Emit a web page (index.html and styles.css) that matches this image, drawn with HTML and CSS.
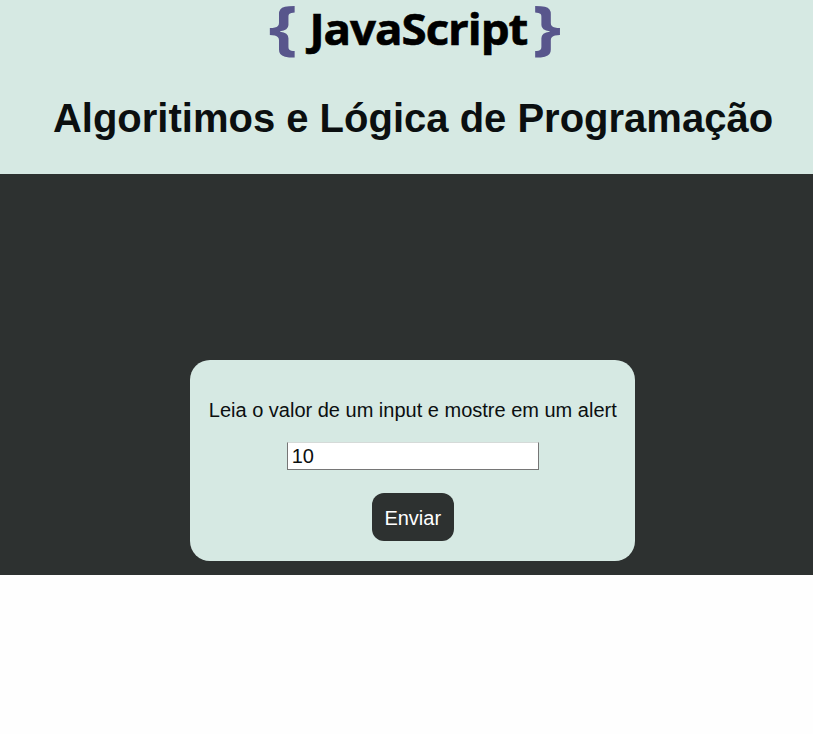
FILE: index.html
```html
<!DOCTYPE html>
<html lang="pt-br">
<head>
<meta charset="utf-8">
<title>Algoritimos e Lógica de Programação</title>
<link rel="stylesheet" href="styles.css">
</head>
<body>
<header class="header">
  <svg class="logo" width="300" height="64" viewBox="0 0 300 64" role="img" aria-label="JavaScript">
    <text class="brace" transform="translate(3.8 47.8) scale(1.24 1)">{</text>
    <text class="word" transform="translate(44.5 44.8) scale(1.05 1)">JavaScript</text>
    <text class="brace" transform="translate(267.2 47.8) scale(1.24 1)">}</text>
  </svg>
  <h1 class="title">Algoritimos e Lógica de Programação</h1>
</header>
<main class="main">
  <section class="card">
    <p class="label">Leia o valor de um input e mostre em um alert</p>
    <input class="field" type="text" value="10">
    <button class="send">Enviar</button>
  </section>
</main>
</body>
</html>
```

FILE: styles.css
```css
* { box-sizing: border-box; }
body { margin: 0; background: #fefefe; font-family: "Liberation Sans", Arial, sans-serif; color: #0b0f10; }
.header { height: 174px; padding-left: 13px; background: #d6e9e3; display: flex; flex-direction: column; align-items: center; }
.logo { display: block; overflow: visible; margin-left: 3px; font-family: "Open Sans", sans-serif; font-weight: 700; }
.word { font-size: 43.5px; letter-spacing: -1px; fill: #000; stroke: #000; stroke-width: 0.6px; }
.brace { fill: #58568c; font-size: 59px; font-weight: 700; }
.title { margin: 31px 0 0; font-size: 40px; line-height: 46px; font-weight: 700; white-space: nowrap; }
.main { height: 401px; background: #2d3130; display: flex; justify-content: center; align-items: flex-end; padding: 0 0 14.5px 12.5px; }
.card { width: 445px; height: 201px; border-radius: 20px; background: #d6e9e3; display: flex; flex-direction: column; align-items: center; padding-top: 39px; }
.label { margin: 0; font-size: 20px; line-height: 23px; white-space: nowrap; }
.field { width: 252px; height: 28px; margin-top: 20.5px; padding: 1px 4px; border: 1px solid #767676; border-top-color: #d5dad8; background: #fff; font: 20px "Liberation Sans", Arial, sans-serif; color: #0b0f10; }
.send { width: 82px; height: 48px; margin-top: 23px; padding: 2px 0 0; border: 0; border-radius: 12px; background: #2d3130; color: #fff; font: 20px "Liberation Sans", Arial, sans-serif; }
```
